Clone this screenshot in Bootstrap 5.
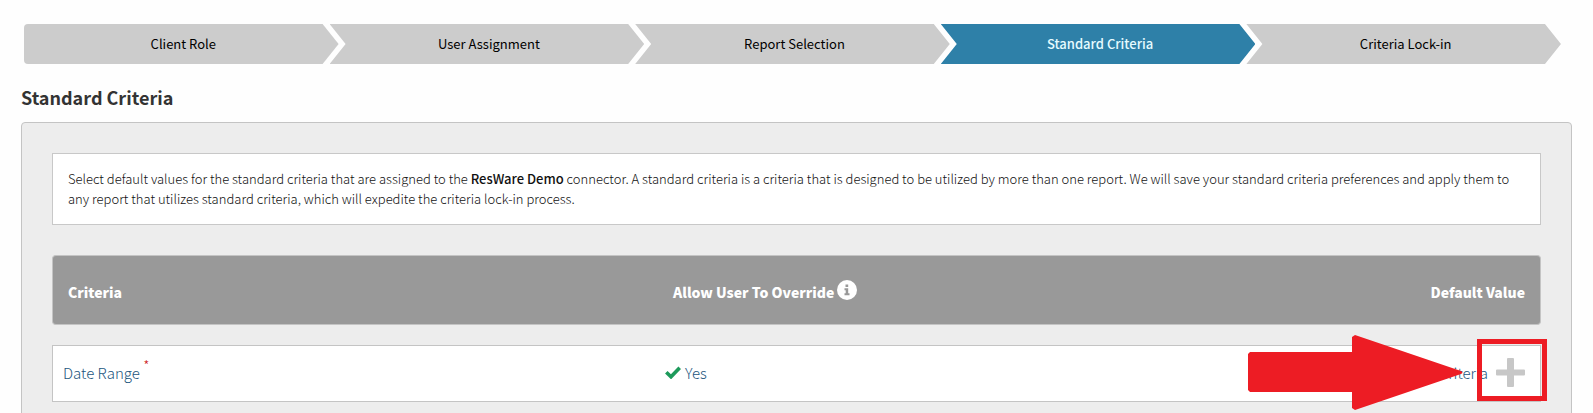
<!DOCTYPE html>
<html lang="en">
<head>
<meta charset="utf-8">
<meta name="viewport" content="width=device-width, initial-scale=1">
<title>Standard Criteria</title>
<link href="https://cdn.jsdelivr.net/npm/bootstrap@5.3.0/dist/css/bootstrap.min.css" rel="stylesheet">
<style>
  body { font-family: "Noto Sans CJK SC", sans-serif; font-size: 13px; line-height: 20px; color: #333; background: #fefefe; }
  .main-area { padding: 24px 21px 0; }
  .wizard { margin: 0 11px 0 3px; height: 40px; }
  .wizard-step { flex: 1 1 0; padding-left: 4px; background: #ccc; color: #000; font-weight: 400; line-height: 40px; text-align: center; text-decoration: none;
    clip-path: polygon(0 0, calc(100% - 16px) 0, 100% 50%, calc(100% - 16px) 100%, 0 100%, 16px 50%); }
  .wizard-item { flex: 1 1 0; display: flex; }
  .wizard-item + .wizard-item { margin-left: -9px; }
  .wizard-item:first-child .wizard-step { border-radius: 4px 0 0 4px; clip-path: polygon(0 0, calc(100% - 16px) 0, 100% 50%, calc(100% - 16px) 100%, 0 100%); }
  .wizard-step.current { background: #2e80a8; color: #e6fbff; font-weight: 500; }
  .page-title { font-size: 18px; line-height: 24px; font-weight: 700; margin: 21px 0 13px; }
  .panel { background: #ededed; border: 1px solid #c4c4c4; border-radius: 4px; padding: 30px 30px 0; }
  .intro { background: #fff; border: 1px solid #c8c8c8; padding: 15px; margin-bottom: 10px; font-weight: 300; color: #111; }
  .intro strong { font-weight: 500; }
  .criteria { border-collapse: separate; border-spacing: 0 20px; table-layout: fixed; width: 100%; }
  .criteria th, .criteria td { border: 1px solid #c4c4c4; border-width: 1px 0; }
  .criteria tr > :first-child { border-left-width: 1px; }
  .criteria tr > :last-child { border-right-width: 1px; text-align: right; }
  .criteria th { background: #999; color: #fff; font-size: 14px; font-weight: 900; height: 70px; padding: 4px 15px 0; }
  .criteria th:first-child { border-radius: 4px 0 0 4px; }
  .criteria th:last-child { border-radius: 0 4px 4px 0; }
  .head-label { display: flex; align-items: center; gap: 3px; }
  .criteria td { background: #fff; height: 57px; padding: 0 10px 2px; font-size: 15px; font-weight: 300; }
  .criteria td a { color: #22557d; text-decoration: none; }
  .criteria td:nth-child(2) { padding-left: 7px; }
  .criteria td:last-child { padding-right: 15px; }
  .col-name { width: 606px; }
  .required-mark { color: #c22; font-size: 14px; top: -8px; }
  .add-btn { width: 29px; height: 29px; }
  .marker-box { top: -7px; right: -7px; width: 70px; height: 62px; border: 5px solid #ed1c24; pointer-events: none; }
  .marker-arrow { top: -11px; right: 77px; pointer-events: none; }
</style>
</head>
<body>
<main class="main-area">
  <ol class="wizard d-flex list-unstyled">
    <li class="wizard-item"><a class="wizard-step" href="#">Client Role</a></li>
    <li class="wizard-item"><a class="wizard-step" href="#">User Assignment</a></li>
    <li class="wizard-item"><a class="wizard-step" href="#">Report Selection</a></li>
    <li class="wizard-item"><a class="wizard-step current" href="#" aria-current="step">Standard Criteria</a></li>
    <li class="wizard-item"><a class="wizard-step" href="#">Criteria Lock-in</a></li>
  </ol>
  <h1 class="page-title">Standard Criteria</h1>
  <section class="panel">
    <p class="intro">Select default values for the standard criteria that are assigned to the <strong>ResWare Demo</strong> connector. A standard criteria is a criteria that is designed to be utilized by more than one report. We will save your standard criteria preferences and apply them to any report that utilizes standard criteria, which will expedite the criteria lock-in process.</p>
    <table class="criteria">
      <colgroup><col class="col-name"><col><col></colgroup>
      <thead>
        <tr>
          <th scope="col">Criteria</th>
          <th scope="col"><span class="head-label">Allow User To Override
            <svg width="20" height="20" class="mb-1" viewBox="0 0 20 20" role="img" aria-label="Information"><circle cx="10" cy="10" r="10" fill="#fff"/><path fill="#999" d="M8.5 4.500h2.700v2.400H8.500zM7.500 8.300h3.700v5h1.300v1.900H7.500v-1.900h1.200v-3.100H7.500z"/></svg></span></th>
          <th scope="col">Default Value</th>
        </tr>
      </thead>
      <tbody>
        <tr>
          <td><a href="#">Date Range</a> <span class="required-mark position-relative">*</span></td>
          <td><a href="#" class="d-flex align-items-center gap-1"><svg width="16" height="13" viewBox="0 0 16 13" aria-hidden="true"><path fill="none" stroke="#1d9a5b" stroke-width="3.600" d="M1.300 6.300l4.700 4.500L14.700 1.700"/></svg>Yes</a></td>
          <td class="position-relative">
            <span class="d-inline-flex align-items-center gap-2"><a href="#">Criteria</a>
            <button type="button" class="add-btn btn p-0 border-0 d-flex" aria-label="Add criteria"><svg width="29" height="29" viewBox="0 0 29 29" aria-hidden="true"><path fill="#c7c7c7" d="M12 0h5q1 0 1 1v10.500h10q1 0 1 1v4q0 1-1 1H18V28q0 1-1 1h-5q-1 0-1-1V17.500H1q-1 0-1-1v-4q0-1 1-1h10V1q0-1 1-1z"/></svg></button></span>
            <svg class="marker-arrow position-absolute" width="215" height="75" viewBox="0 0 215 75" aria-hidden="true"><path fill="#ed1c24" d="M2 17H104V2l3-2L213 36q3 1.500 0 3L107 75l-3-2V57H2l-2-2V19z"/></svg>
            <span class="marker-box position-absolute"></span>
          </td>
        </tr>
      </tbody>
    </table>
  </section>
</main>
<script src="https://cdn.jsdelivr.net/npm/bootstrap@5.3.0/dist/js/bootstrap.bundle.min.js"></script>
</body>
</html>
